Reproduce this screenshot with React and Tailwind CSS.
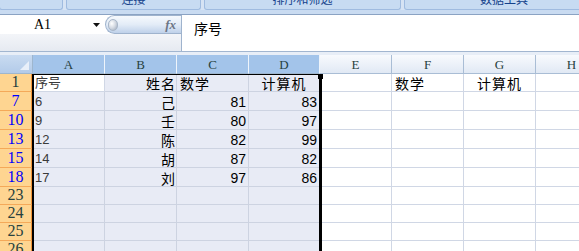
import React from "react";

const zh = "font-['Noto_Sans_CJK_SC',sans-serif]";
const lat = "font-['Liberation_Sans','Noto_Sans_CJK_SC',sans-serif]";
const serif = "font-['Liberation_Serif',serif]";

// column widths of A..H
const cols = [
  { name: "A", w: "w-[72px]", sel: true },
  { name: "B", w: "w-[72px]", sel: true },
  { name: "C", w: "w-[72px]", sel: true },
  { name: "D", w: "w-[71px]", sel: true },
  { name: "E", w: "w-[72px]" },
  { name: "F", w: "w-[72px]" },
  { name: "G", w: "w-[72px]" },
  { name: "H", w: "w-[72px]" },
];

const rows = [
  {
    n: "1",
    h: "h-[18px]",
    cells: [
      { t: "序号", k: "a" },
      { t: "姓名", k: "zhR" },
      { t: "数学", k: "zhL" },
      { t: "计算机", k: "zhC" },
      null,
      { t: "数学", k: "zhL" },
      { t: "计算机", k: "zhC" },
    ],
  },
  { n: "7", blue: true, h: "h-[19px]", cells: [{ t: "6", k: "a" }, { t: "己", k: "zhR" }, { t: "81", k: "num" }, { t: "83", k: "num" }] },
  { n: "10", blue: true, h: "h-[19px]", cells: [{ t: "9", k: "a" }, { t: "壬", k: "zhR" }, { t: "80", k: "num" }, { t: "97", k: "num" }] },
  { n: "13", blue: true, h: "h-[19px]", cells: [{ t: "12", k: "a" }, { t: "陈", k: "zhR" }, { t: "82", k: "num" }, { t: "99", k: "num" }] },
  { n: "15", blue: true, h: "h-[19px]", cells: [{ t: "14", k: "a" }, { t: "胡", k: "zhR" }, { t: "87", k: "num" }, { t: "82", k: "num" }] },
  { n: "18", blue: true, h: "h-[19px]", cells: [{ t: "17", k: "a" }, { t: "刘", k: "zhR" }, { t: "97", k: "num" }, { t: "86", k: "num" }] },
  { n: "23", h: "h-[18px]", cells: [] },
  { n: "24", h: "h-[18px]", cells: [] },
  { n: "25", h: "h-[18px]", cells: [] },
  { n: "26", h: "h-[18px]", cells: [] },
];

const kinds = {
  a: `justify-start pl-[2px] text-[13px] text-[#3a3a3a] ${lat}`,
  zhR: `justify-end text-[14px] tracking-[1px] text-black ${zh}`,
  zhL: `justify-start pl-[3px] text-[14px] tracking-[1px] text-black ${zh}`,
  zhC: `justify-center text-[14px] tracking-[1px] text-black ${zh}`,
  num: `justify-end pr-[2px] text-[14px] text-black ${lat}`,
};

const Tab = ({ w, label }) => (
  <div className={`${w} h-[10px] shrink-0 flex items-end justify-center overflow-hidden rounded-b-[3px] border border-t-0 border-[#9fbbe0] bg-[#c7dbf2]`}>
    <span className={`mb-[3px] text-[12px] leading-[14px] text-[#15428b] ${zh}`}>{label}</span>
  </div>
);

export default function App() {
  return (
    <div className="w-[579px] h-[251px] overflow-hidden bg-white flex flex-col">
      {/* ribbon tabs, clipped */}
      <div className="h-[10px] flex gap-[3px] bg-[#d6e3f4] shrink-0">
        <Tab w="w-[64px] -ml-[1px]" label="" />
        <Tab w="w-[135px]" label="连接" />
        <Tab w="w-[197px]" label="排序和筛选" />
        <Tab w="w-[200px]" label="数据工具" />
      </div>
      <div className="h-[5px] shrink-0 bg-[#c9dbf1] border-b border-[#8ba3c3]" />

      {/* formula bar */}
      <div className="h-[37px] shrink-0 flex border-b border-[#a2b6d0]">
        <div className="w-[182px] flex flex-col border-r border-[#9fb3cd]">
          <div className="h-[19px] flex">
            <div className="w-[105px] relative flex items-center bg-white">
              <span className={`ml-[34px] text-[14px] leading-none text-black ${serif}`}>A1</span>
              <svg className="absolute left-[93px] top-[8px]" width="8" height="4" viewBox="0 0 8 4">
                <path d="M0 0H7L3.5 4Z" fill="#111" />
              </svg>
            </div>
            <div className="flex-1 relative flex items-center rounded-l-full border border-r-0 border-[#9fb3cd] bg-linear-to-b from-[#f6f9fd] via-[#e3ecf7] to-[#bfd1ea]">
              <div className="ml-[2px] w-[10px] h-[12px] rounded-full border border-[#a9b7c9] bg-radial-[at_35%_35%] from-white via-[#d3d9e2] to-[#9aa6b6]" />
              <span className={`ml-auto mr-[5px] text-[13px] italic font-bold leading-none text-[#6d7686] ${serif}`}>fx</span>
            </div>
          </div>
          <div className="flex-1 bg-linear-to-b from-[#f3f5f9] to-[#e6eaf1]" />
        </div>
        <div className="flex-1 bg-white">
          <div className={`pl-[12px] pt-[5px] text-[14px] leading-[16px] text-black ${zh}`}>序号</div>
        </div>
      </div>
      <div className="h-[3px] shrink-0 bg-[#e8eef7]" />

      {/* sheet */}
      <div className="relative flex-1 overflow-hidden">
        <div className="h-[19px] flex">
          <div className="w-[33px] shrink-0 relative bg-linear-to-b from-[#c9dbf1] to-[#b3cbe9] border-r border-b border-[#9eb6ce]">
            <svg className="absolute right-[3px] bottom-[3px]" width="9" height="9" viewBox="0 0 9 9">
              <path d="M9 0V9H0Z" fill="#e8eff9" />
            </svg>
          </div>
          {cols.map((c) => (
            <div
              key={c.name}
              className={`${c.w} shrink-0 flex items-center justify-center border-b text-[13px] leading-none text-[#27413e] ${serif} ${
                c.sel
                  ? "bg-[#a3c4ea] border-r border-r-[#eef4fb] border-b-[#9eb6ce]"
                  : "bg-linear-to-b from-[#f8fafd] to-[#e1e9f4] border-r border-[#a9bdd5]"
              }`}
            >
              {c.name}
            </div>
          ))}
        </div>

        {rows.map((r) => (
          <div key={r.n} className={`${r.h} flex`}>
            <div
              className={`w-[33px] shrink-0 flex items-end justify-center bg-[#fed591] border-b border-b-[#f4a959] border-r-2 border-r-[#f29436] text-[16px] leading-[18px] ${serif} ${
                r.blue ? "text-[#0000ff]" : "text-[#27413e]"
              }`}
            >
              {r.n}
            </div>
            {cols.map((c, i) => {
              const cell = r.cells[i];
              const white = !c.sel || (r.n === "1" && i === 0);
              return (
                <div
                  key={c.name}
                  className={`${c.w} shrink-0 flex items-end overflow-hidden whitespace-nowrap leading-[16px] border-r border-b ${
                    white ? "bg-white border-[#d0d7e5]" : "bg-[#e8ebf5] border-[#cdd3e1]"
                  } ${cell ? kinds[cell.k] : ""}`}
                >
                  {cell ? cell.t : ""}
                </div>
              );
            })}
          </div>
        ))}

        {/* selection border A1:D */}
        <div className="absolute left-[32px] top-[19px] w-[290px] bottom-0 border-l-2 border-r-[3px] border-t border-black pointer-events-none">
          <div className="absolute -top-[1px] -right-[4px] w-[5px] h-[5px] bg-black" />
        </div>
      </div>
    </div>
  );
}
